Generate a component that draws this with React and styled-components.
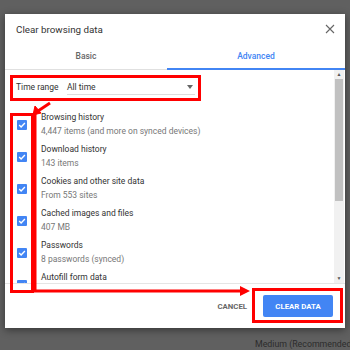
import React from 'react';
import styled, { createGlobalStyle } from 'styled-components';

const GlobalStyle = createGlobalStyle`
  html, body {
    margin: 0;
    padding: 0;
    background: #606060;
  }
  body {
    font-family: Roboto, "Liberation Sans", Arial, sans-serif;
  }
`;

const items = [
  { title: 'Browsing history', sub: '4,447 items (and more on synced devices)' },
  { title: 'Download history', sub: '143 items' },
  { title: 'Cookies and other site data', sub: 'From 553 sites' },
  { title: 'Cached images and files', sub: '407 MB' },
  { title: 'Passwords', sub: '8 passwords (synced)' },
  { title: 'Autofill form data', sub: '' },
];

const Check = () => (
  <svg width="10" height="10" viewBox="0 0 10 10">
    <rect width="10" height="10" rx="1" fill="#4285f4" />
    <path d="M2.2 5.1 L4.1 7 L7.9 3.1" stroke="#fff" strokeWidth="1.4" fill="none" />
  </svg>
);

const App = () => {
  return (
    <Page>
      <GlobalStyle />
      <Dialog>
        <Header>
          <Title>Clear browsing data</Title>
          <Close>
            <svg width="10" height="10" viewBox="0 0 10 10">
              <path d="M1 1 L9 9 M9 1 L1 9" stroke="#666" strokeWidth="1.1" />
            </svg>
          </Close>
        </Header>
        <Tabs>
          <Tab $w={162}>Basic</Tab>
          <Tab $w={178} $active>Advanced</Tab>
        </Tabs>
        <Body>
          <List>
            <RangeRow>
              <RangeLabel>Time range</RangeLabel>
              <Select>
                All time
                <Caret />
              </Select>
            </RangeRow>
            {items.map((it) => (
              <Item key={it.title}>
                <CheckBox><Check /></CheckBox>
                <ItemText>
                  <ItemTitle>{it.title}</ItemTitle>
                  {it.sub && <ItemSub>{it.sub}</ItemSub>}
                </ItemText>
              </Item>
            ))}
          </List>
          <Scrollbar>
            <ScrollArrow>▲</ScrollArrow>
            <Thumb />
            <ScrollArrow>▼</ScrollArrow>
          </Scrollbar>
        </Body>
        <Footer>
          <TextButton>CANCEL</TextButton>
          <PrimaryButton>CLEAR DATA</PrimaryButton>
        </Footer>
      </Dialog>
      <BehindText>Medium (Recommended</BehindText>

      <Annotations width="350" height="350" viewBox="0 0 350 350">
        <rect x="11.5" y="76.5" width="188" height="23" fill="none" stroke="#f00" strokeWidth="3" />
        <rect x="11.5" y="114.5" width="21" height="177" fill="none" stroke="#f00" strokeWidth="3" />
        <path d="M50 103 L38 111" stroke="#f00" strokeWidth="3" />
        <path d="M33 115 L35 106 L41 113 Z" fill="#f00" stroke="#f00" strokeWidth="1" />
        <path d="M35 113 L35 291 L242 291" fill="none" stroke="#f00" strokeWidth="3" />
        <path d="M240 286 L250 291 L240 296 Z" fill="#f00" />
        <rect x="253.5" y="289.5" width="88" height="32" fill="none" stroke="#f00" strokeWidth="3" />
      </Annotations>
    </Page>
  );
};
export default App;

const Page = styled.div`
  position: relative;
  width: 350px;
  height: 350px;
  overflow: hidden;
  padding-top: 14px;
  box-sizing: border-box;
`;

const Dialog = styled.div`
  margin-left: 5px;
  width: 340px;
  height: 314px;
  background: #fff;
  box-shadow: 0 2px 8px rgba(0, 0, 0, 0.45);
  display: flex;
  flex-direction: column;
`;

const Header = styled.div`
  height: 30px;
  display: flex;
  align-items: center;
  justify-content: space-between;
  padding: 0 10px 0 11px;
`;

const Title = styled.div`
  font-size: 9.8px;
  color: #333;
`;

const Close = styled.div`
  display: flex;
  align-items: center;
`;

const Tabs = styled.div`
  display: flex;
  height: 25px;
  border-bottom: 1px solid #e0e0e0;
`;

const Tab = styled.div`
  width: ${(p) => p.$w}px;
  display: flex;
  align-items: center;
  justify-content: center;
  font-size: 8.5px;
  font-weight: 500;
  color: ${(p) => (p.$active ? '#4285f4' : '#666')};
  border-bottom: 2px solid ${(p) => (p.$active ? '#4285f4' : 'transparent')};
  margin-bottom: -1px;
`;

const Body = styled.div`
  height: 213px;
  display: flex;
  border-bottom: 1px solid #e5e5e5;
  overflow: hidden;
`;

const List = styled.div`
  flex: 1;
  padding: 6px 0 0 11px;
  overflow: hidden;
`;

const RangeRow = styled.div`
  height: 22px;
  display: flex;
  align-items: center;
  margin-bottom: 12px;
`;

const RangeLabel = styled.div`
  font-size: 8.5px;
  color: #333;
  width: 51px;
`;

const Select = styled.div`
  width: 128px;
  height: 16px;
  display: flex;
  align-items: center;
  justify-content: space-between;
  border-bottom: 1px solid #ddd;
  font-size: 8.5px;
  color: #333;
  box-sizing: border-box;
  padding-right: 2px;
`;

const Caret = styled.span`
  width: 0;
  height: 0;
  border-left: 3.5px solid transparent;
  border-right: 3.5px solid transparent;
  border-top: 4px solid #666;
`;

const Item = styled.div`
  height: 32px;
  display: flex;
  align-items: flex-start;
`;

const CheckBox = styled.div`
  width: 10px;
  height: 10px;
  margin: 10px 14px 0 1px;
  line-height: 0;
`;

const ItemText = styled.div`
  display: flex;
  flex-direction: column;
`;

const ItemTitle = styled.div`
  font-size: 8.5px;
  line-height: 14px;
  color: #333;
`;

const ItemSub = styled.div`
  font-size: 8.5px;
  line-height: 14px;
  color: #777;
`;

const Scrollbar = styled.div`
  width: 10px;
  margin-right: 1px;
  background: #f1f1f1;
  display: flex;
  flex-direction: column;
  align-items: center;
`;

const ScrollArrow = styled.div`
  height: 9px;
  font-size: 5px;
  line-height: 9px;
  color: #555;
`;

const Thumb = styled.div`
  width: 8px;
  height: 122px;
  background: #c1c1c1;
  flex: none;
  margin-bottom: auto;
`;

const Footer = styled.div`
  flex: 1;
  display: flex;
  align-items: center;
  justify-content: flex-end;
  padding: 0 12px 0 0;
  gap: 16px;
`;

const TextButton = styled.div`
  font-size: 7.8px;
  font-weight: 700;
  color: #666;
`;

const PrimaryButton = styled.div`
  width: 70px;
  height: 22px;
  border-radius: 2px;
  background: #4285f4;
  color: #fff;
  font-size: 7.8px;
  font-weight: 700;
  display: flex;
  align-items: center;
  justify-content: center;
`;

const BehindText = styled.div`
  margin: 11px 0 0 255px;
  font-size: 8.8px;
  color: #2c2c2c;
  white-space: nowrap;
`;

const Annotations = styled.svg`
  position: absolute;
  left: 0;
  top: 0;
  pointer-events: none;
`;
